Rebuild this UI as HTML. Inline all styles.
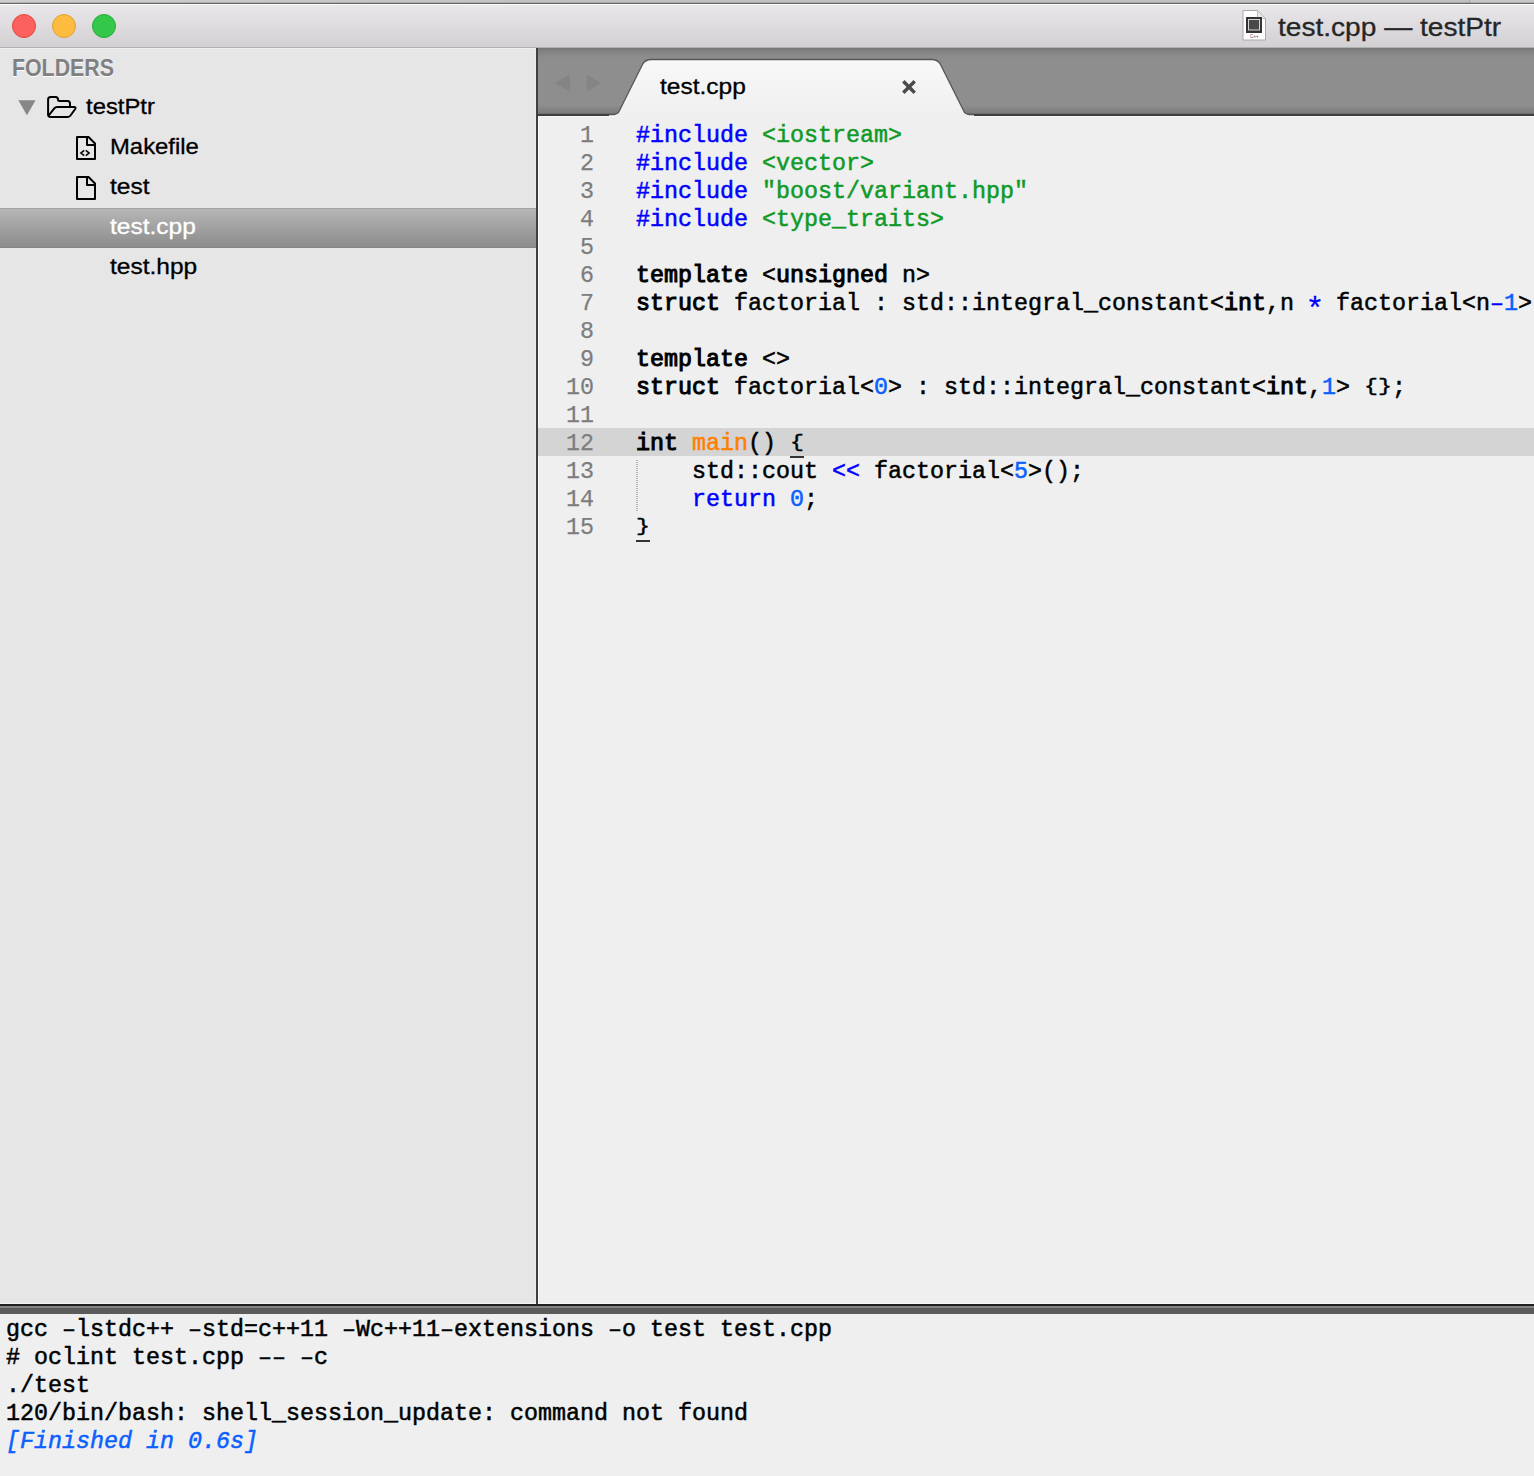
<!DOCTYPE html>
<html>
<head>
<meta charset="utf-8">
<title>test.cpp — testPtr</title>
<style>
html,body{margin:0;padding:0;}
body{width:1534px;height:1476px;overflow:hidden;background:#efefef;position:relative;font-family:"Liberation Sans",sans-serif;}
.abs{position:absolute;}
/* top strip + title bar */
#topstrip{left:0;top:0;width:1534px;height:3px;background:linear-gradient(to right,#cecece 0,#c1c1c1 600px,#c0c0c0 1469px,#a8a8a8 1469px,#a8a8a8 1470px,#c8c8c8 1470px);}
#topstrip2{left:0;top:2px;width:1534px;height:1px;background:rgba(0,0,0,0.12);}
#topline{left:0;top:3px;width:1534px;height:1px;background:#666;}
#tophl{left:0;top:4px;width:1534px;height:1px;background:#fbfbfb;}
#titlebar{left:0;top:5px;width:1534px;height:42px;background:linear-gradient(#e9e7e9,#d2d0d2);}
#titleborder{left:0;top:47px;width:1534px;height:1px;background:#b0b0b0;}
.tl{width:24px;height:24px;border-radius:50%;top:14px;box-sizing:border-box;}
#tl-r{left:12px;background:#fc615d;border:1px solid #e0443e;}
#tl-y{left:52px;background:#fdbc40;border:1px solid #dea133;}
#tl-g{left:92px;background:#34c84a;border:1px solid #27aa35;}
#title{left:1278px;top:10px;font-size:26px;line-height:34px;color:#262626;white-space:nowrap;transform-origin:0 50%;transform:scaleX(1.08);-webkit-text-stroke:0.3px #262626;}
/* sidebar */
#sidebar{left:0;top:48px;width:536px;height:1256px;background:#e6e6e6;}
#sidebar-hl{left:0;top:48px;width:536px;height:1px;background:#efefef;}
#sidebar-rhl{left:535px;top:48px;width:1px;height:1256px;background:#ebebeb;}
#vdiv{left:536px;top:48px;width:2px;height:1256px;background:#404040;}
.sb{white-space:nowrap;font-size:22.5px;line-height:40px;height:40px;color:#000;transform-origin:0 50%;transform:scaleX(1.09);-webkit-text-stroke:0.3px currentColor;}
#folders{left:12px;top:47.5px;font-weight:bold;font-size:23.7px;transform:scaleX(0.9);line-height:40px;color:#808080;text-shadow:0 1px 0 #fff;white-space:nowrap;transform-origin:0 50%;}
#sel{left:0;top:208px;width:536px;height:40px;background:linear-gradient(#b6b6b6,#8c8c8c);border-top:1px solid #a2a2a2;border-bottom:1px solid #858585;box-sizing:border-box;}
/* tab bar */
#tabbar{left:538px;top:48px;width:996px;height:65px;background:linear-gradient(#757575 0px,#848484 4px,#8e8e8e 10px,#8e8e8e 57px,#7c7c7c 65px);}
#tabline{left:538px;top:113px;width:996px;height:3px;background:linear-gradient(#727272 0,#727272 1px,#404040 1px,#3c3c3c 3px);}
#tabtext{left:660px;top:67px;}
/* editor */
#editor{left:538px;top:116px;width:996px;height:1188px;background:#efefef;}
.mono{font-family:"Liberation Mono",monospace;font-size:23.33px;line-height:28px;white-space:pre;color:#000;-webkit-text-stroke:0.5px currentColor;}
#hl12{left:538px;top:428px;width:996px;height:28px;background:#d4d4d4;}
#gutter{left:538px;top:122px;width:56px;text-align:right;color:#7d7d7d;-webkit-text-stroke:0.25px #7d7d7d;}
#code{left:636px;top:122px;}
.ast{display:inline-block;transform:translateY(7px) scale(1.35);-webkit-text-stroke:0.2px currentColor;}
.br{display:inline-block;transform:scaleY(0.82);transform-origin:50% 2px;}
.k{font-weight:normal;-webkit-text-stroke:1.0px currentColor;}
.b{color:#0000ff;}
.g{color:#0f9a28;}
.n{color:#0a60ff;}
.o{color:#ff8000;}
/* bottom */
#hsplit1{left:0;top:1304px;width:1534px;height:2px;background:#222;}
#hsplit2{left:0;top:1306px;width:1534px;height:2px;background:#848484;}
#hsplit3{left:0;top:1308px;width:1534px;height:6px;background:#5b5b5b;}
#panel{left:0;top:1314px;width:1534px;height:162px;background:#efefef;}
#out{left:6px;top:1316px;}
.fin{color:#0a60ff;font-style:italic;}
</style>
</head>
<body>
<div class="abs" id="topstrip"></div>
<div class="abs" id="topstrip2"></div>
<div class="abs" id="topline"></div>
<div class="abs" id="tophl"></div>
<div class="abs" id="titlebar"></div>
<div class="abs" id="titleborder"></div>
<div class="abs tl" id="tl-r"></div>
<div class="abs tl" id="tl-y"></div>
<div class="abs tl" id="tl-g"></div>

<svg class="abs" style="left:1238px;top:6px;" width="32" height="40" viewBox="1238 6 32 40">
<path d="M1243 10.5 L1257.5 10.5 L1265.5 18.5 L1265.5 40 L1243 40 Z" fill="#fdfdfd" stroke="#a9a9a9" stroke-width="1"/>
<path d="M1257.5 10.5 L1257.5 18.5 L1265.5 18.5 Z" fill="#e9e9e9" stroke="#b5b5b5" stroke-width="0.8"/>
<rect x="1246" y="17" width="16" height="16" fill="#333"/>
<rect x="1248" y="19" width="12" height="11.5" fill="#d6d6d6"/>
<rect x="1249" y="20" width="10" height="9.5" fill="#484848"/>
<text x="1254.3" y="38" font-family="Liberation Sans, sans-serif" font-size="4.6" text-anchor="middle" fill="#555">C++</text>
</svg>
<div class="abs" id="title">test.cpp — testPtr</div>

<div class="abs" id="sidebar"></div>
<div class="abs" id="sidebar-hl"></div>
<div class="abs" id="sidebar-rhl"></div>
<div class="abs" id="vdiv"></div>
<div class="abs" id="sel"></div>
<div class="abs" id="folders">FOLDERS</div>
<div class="abs sb" style="left:86px;top:87px;transform:scaleX(1.06);">testPtr</div>
<div class="abs sb" style="left:109.5px;top:127px;transform:scaleX(1.06);">Makefile</div>
<div class="abs sb" style="left:110px;top:167px;">test</div>
<div class="abs sb" style="left:110px;top:207px;color:#fff;">test.cpp</div>
<div class="abs sb" style="left:110px;top:247px;">test.hpp</div>


<svg class="abs" style="left:0;top:48px;" width="536" height="300" viewBox="0 48 536 300">
<polygon points="18.3,100.2 35.6,100.2 26.95,115.2" fill="#878787"/>
<g fill="none" stroke="#000" stroke-width="2" stroke-linejoin="round" stroke-linecap="round">
<path d="M48.1 114 L48.1 99.5 Q48.1 97 50.6 97 L55.5 97 Q58 97 58 99.5 Q58 101 59.5 101 L67.5 101 Q70 101 70 103.5 L70 106.5"/>
<path d="M48.6 115.6 L54.5 108.2 Q55.5 107 57 107 L74 107 Q76.3 107 75.2 109 L70.5 115.5 Q69.5 116.9 68 116.9 L50.5 116.9 Q48.1 116.9 48.1 114.5"/>
<path d="M77 137 L88.5 137 L95 143.5 L95 159 L77 159 Z"/>
<path d="M87 137 L87 145 L95 145"/>
<path d="M77 177 L88.5 177 L95 183.5 L95 199 L77 199 Z"/>
<path d="M87 177 L87 185 L95 185"/>
</g>
<g fill="none" stroke="#000" stroke-width="1.5" stroke-linejoin="miter">
<path d="M84.2 150.4 L80.9 153 L84.2 155.6"/>
<path d="M85.8 150.4 L89.1 153 L85.8 155.6"/>
</g>
</svg>
<div class="abs" id="tabbar"></div>
<div class="abs" id="tabline"></div>
<div class="abs" id="editor"></div>

<div class="abs" style="left:538px;top:48px;width:996px;height:68px;background:linear-gradient(#8e8e8e 0,#8e8e8e 11px,#f8f8f8 11px,#efefef 68px);clip-path:path('M 71 68 L 71 66.5 L 73.5 66.5 L 75 66.5 C 78 66.5 79.5 66 80.75 64 L 104.5 16.5 C 106.5 12.5 109.5 11.5 113.5 11.5 L 393.5 11.5 C 397.5 11.5 400.5 12.5 402.5 16.5 L 426.25 64 C 427.5 66 429 66.5 432 66.5 L 436 66.5 L 436 68 Z');"></div>
<svg class="abs" style="left:538px;top:48px;" width="996" height="68" viewBox="538 48 996 68">
<polygon points="554.7,83 569.8,74.6 569.8,91.4" fill="#848484"/>
<polygon points="601,83 586.6,74.6 586.6,91.4" fill="#848484"/>
<path d="M609 114.5 L611.5 114.5 L613 114.5 C616 114.5 617.5 114 618.75 112 L642.5 64.5 C644.5 60.5 647.5 59.5 651.5 59.5 L931.5 59.5 C935.5 59.5 938.5 60.5 940.5 64.5 L964.25 112 C965.5 114 967 114.5 970 114.5 L974 114.5" fill="none" stroke="#555" stroke-width="1.3"/>
<g stroke="#4a4a4a" stroke-width="3.4" stroke-linecap="butt">
<line x1="903.3" y1="81.3" x2="914.7" y2="92.7"/><line x1="914.7" y1="81.3" x2="903.3" y2="92.7"/>
</g>
</svg>
<div class="abs sb" id="tabtext">test.cpp</div>


<div class="abs" style="left:0;top:1303px;width:536px;height:1px;background:#f6f6f6;"></div>
<div class="abs" style="left:538px;top:1303px;width:996px;height:1px;background:#f9f9f9;"></div>
<div class="abs" style="left:538px;top:116px;width:1px;height:1188px;background:#f9f9f9;"></div>
<div class="abs" style="left:0;top:1314px;width:1534px;height:1px;background:#fafafa;"></div>
<div class="abs" style="left:538px;top:116px;width:76px;height:1px;background:#f8f8f8;"></div>
<div class="abs" style="left:970px;top:116px;width:564px;height:1px;background:#f8f8f8;"></div>
<div class="abs" id="hl12"></div>
<div class="abs mono" id="gutter">1
2
3
4
5
6
7
8
9
10
11
12
13
14
15</div>
<div class="abs mono" id="code"><span class="b">#include</span> <span class="g">&lt;iostream&gt;</span>
<span class="b">#include</span> <span class="g">&lt;vector&gt;</span>
<span class="b">#include</span> <span class="g">"boost/variant.hpp"</span>
<span class="b">#include</span> <span class="g">&lt;type_traits&gt;</span>

<span class="k">template</span> &lt;<span class="k">unsigned</span> n&gt;
<span class="k">struct</span> factorial : std::integral_constant&lt;<span class="k">int</span>,n <span class="b ast">*</span> factorial&lt;n<span class="b">–</span><span class="n">1</span>&gt;

<span class="k">template</span> &lt;&gt;
<span class="k">struct</span> factorial&lt;<span class="n">0</span>&gt; : std::integral_constant&lt;<span class="k">int</span>,<span class="n">1</span>&gt; <span class="br">{</span><span class="br">}</span>;

<span class="k">int</span> <span class="o">main</span>() <span class="br">{</span>
    std::cout <span class="b">&lt;&lt;</span> factorial&lt;<span class="n">5</span>&gt;();
    <span class="b">return</span> <span class="n">0</span>;
<span class="br">}</span></div>


<div class="abs" style="left:790px;top:456px;width:14px;height:2px;background:#333;"></div>
<div class="abs" style="left:636px;top:540px;width:14px;height:2px;background:#333;"></div>
<div class="abs" style="left:636px;top:460px;width:2px;height:51px;background:repeating-linear-gradient(#b4b4b4 0,#b4b4b4 1px,transparent 1px,transparent 2px);"></div>
<div class="abs" id="hsplit1"></div>
<div class="abs" id="hsplit2"></div>
<div class="abs" id="hsplit3"></div>
<div class="abs" id="panel"></div>
<div class="abs mono" id="out">gcc –lstdc++ –std=c++11 –Wc++11–extensions –o test test.cpp
# oclint test.cpp –– –c
./test
120/bin/bash: shell_session_update: command not found
<span class="fin">[Finished in 0.6s]</span></div>
</body>
</html>
